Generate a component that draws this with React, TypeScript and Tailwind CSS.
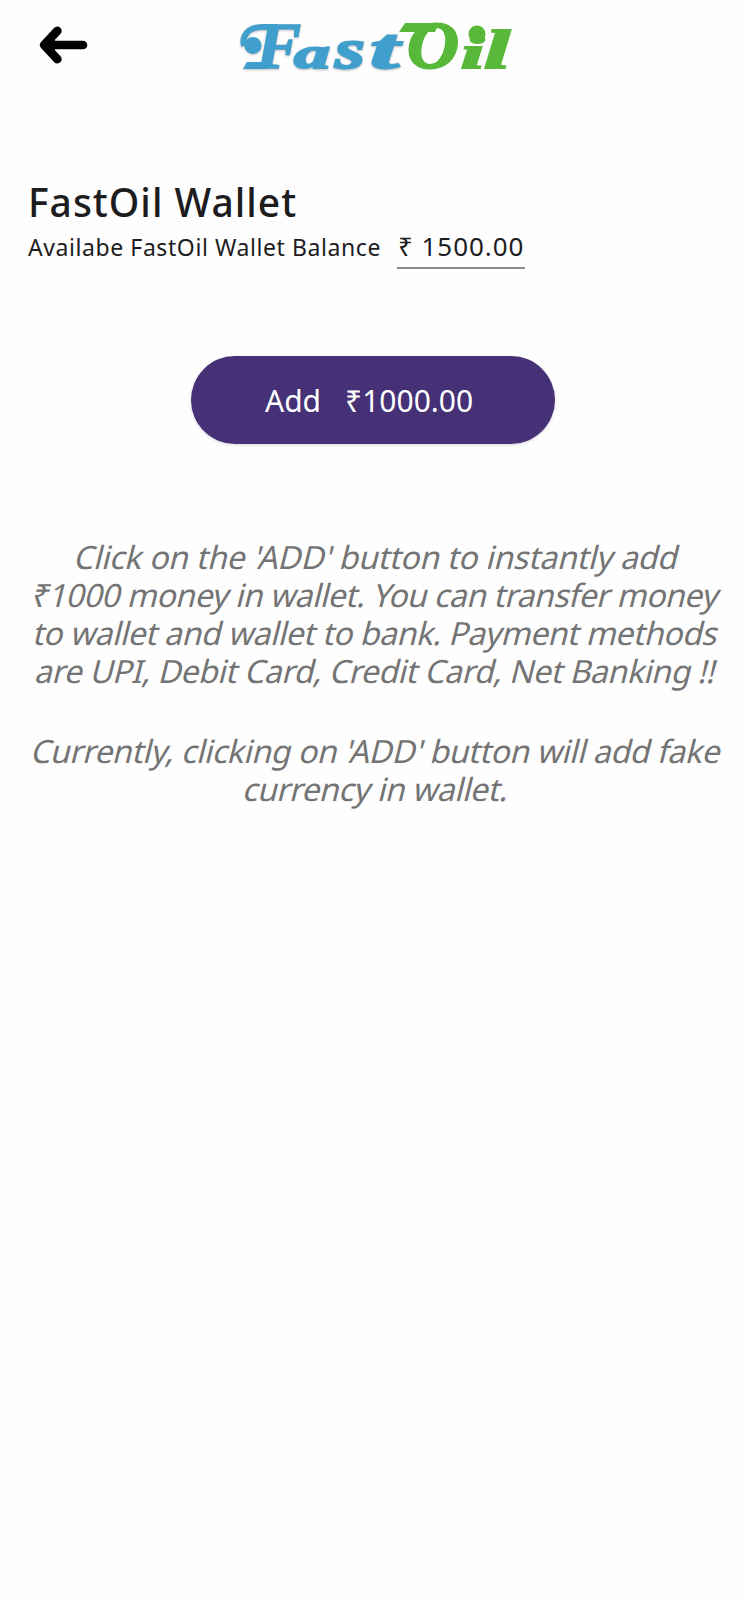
import React from "react";

function BackArrow() {
  return (
    <svg width="50" height="42" viewBox="0 0 50 42" fill="none" stroke="#000" strokeWidth="8.6" strokeLinecap="round" strokeLinejoin="round">
      <path d="M45 21H8M19.4 6.8L6.2 21l13.2 14.2" />
      <path d="M7 21l9-7v14z" fill="#000" strokeWidth="2" />
    </svg>
  );
}

function Logo() {
  return (
    <svg width="280" height="90" viewBox="0 0 280 90" className="overflow-visible" aria-label="FastOil" fontFamily="'Liberation Serif', serif" fontWeight="700" fontStyle="italic">
      <g className="drop-shadow-[0_1px_1px_rgba(0,0,0,0.25)]" fill="#409fcc" stroke="#409fcc">
        <path d="M42 27H27C13 27 6.500 36 9 46" fill="none" strokeWidth="6" />
        <circle cx="18" cy="45.500" r="8.500" stroke="none" />
        <path d="M12 62h20v7H8z" stroke="none" />
        <text x="21" y="68" fontSize="66" strokeWidth="1.500" textLength="45" lengthAdjust="spacingAndGlyphs">F</text>
        <text x="59" y="68" fontSize="45" strokeWidth="2" textLength="36" lengthAdjust="spacingAndGlyphs">a</text>
        <text x="100" y="68" fontSize="58" strokeWidth="2" textLength="30" lengthAdjust="spacingAndGlyphs">s</text>
        <text x="135" y="68" fontSize="56" strokeWidth="2" textLength="29" lengthAdjust="spacingAndGlyphs">t</text>
      </g>
      <g fill="#58b83a" stroke="none">
        <path d="M170 23h34l-4 9h-36z" />
        <g stroke="#58b83a" strokeWidth="2">
          <text x="172" y="68" fontSize="67" textLength="52" lengthAdjust="spacingAndGlyphs">O</text>
          <text x="226" y="68" fontSize="46" textLength="23" lengthAdjust="spacingAndGlyphs">i</text>
          <text x="249" y="68" fontSize="55" textLength="26" lengthAdjust="spacingAndGlyphs">l</text>
        </g>
        <circle cx="242" cy="34" r="8.500" />
      </g>
    </svg>
  );
}

function Line({ children, className }: { children: React.ReactNode; className: string }) {
  return <span className={`block h-[38px] origin-bottom -skew-x-[14deg] whitespace-nowrap ${className}`}>{children}</span>;
}

export default function App() {
  return (
    <div className="flex h-[1600px] w-[747px] flex-col overflow-hidden bg-[#fefefe] font-['Noto_Sans',sans-serif] text-[#1d1c1e]">
      <header className="flex h-[90px] pl-[38px]">
        <button className="mt-6 h-[42px]" aria-label="Back"><BackArrow /></button>
        <div className="ml-[147px] h-[90px]"><Logo /></div>
      </header>
      <main className="flex flex-col">
        <section className="mt-[85px] px-7">
          <h1 className="h-[54px] text-[39px] font-medium leading-[54px] tracking-[1px]">FastOil Wallet</h1>
          <div className="flex h-10 items-start">
            <p className="w-[369px] whitespace-nowrap pt-px text-[23px] leading-[34px] tracking-[0.58px]">Availabe FastOil Wallet Balance</p>
            <p className="h-10 w-32 whitespace-pre border-b-2 border-[#8b8b8b] pl-px text-[26px] leading-[34px] tracking-[0.95px]">₹ 1500.00</p>
          </div>
        </section>
        <button className="ml-[191px] mt-[87px] flex h-[88px] w-[364px] items-center rounded-full bg-[#463176] pl-[74px] text-[30px] text-white shadow-[0_1px_3px_rgba(70,49,118,0.2)]">
          <span className="w-20 text-left">Add</span>
          <span>₹1000.00</span>
        </button>
        <section className="mt-[94px] text-[32px] leading-[38px] text-[#747474]">
          <p>
            <Line className="pl-[71px] tracking-[-0.25px]">Click on the 'ADD' button to instantly add</Line>
            <Line className="pl-[28px] tracking-[-0.5px]">₹1000 money in wallet. You can transfer money</Line>
            <Line className="pl-[30px] tracking-[-0.48px]">to wallet and wallet to bank. Payment methods</Line>
            <Line className="pl-[32px] tracking-[-0.44px]">are UPI, Debit Card, Credit Card, Net Banking !!</Line>
          </p>
          <p className="mt-[42px]">
            <Line className="pl-[28px] tracking-[-0.4px]">Currently, clicking on 'ADD' button will add fake</Line>
            <Line className="pl-[240px] tracking-[-0.43px]">currency in wallet.</Line>
          </p>
        </section>
      </main>
    </div>
  );
}
